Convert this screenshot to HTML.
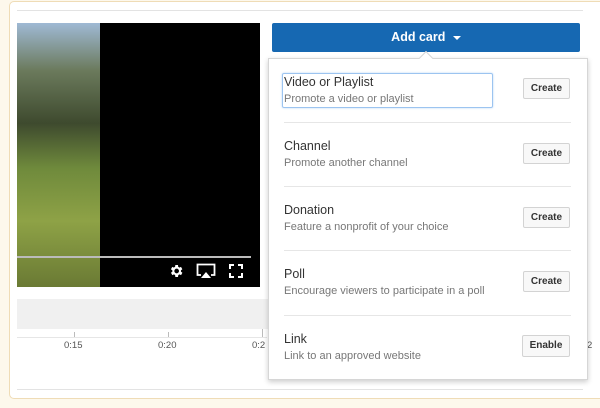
<!DOCTYPE html>
<html><head><style>
*{margin:0;padding:0;box-sizing:border-box}
body{width:600px;height:408px;background:#fdf8ec;font-family:"Liberation Sans",sans-serif;position:relative;overflow:hidden}
.frame{position:absolute;left:9px;top:1px;width:600px;height:398px;background:#fff;border:1px solid #efdcb6;border-radius:5px}
.abs{position:absolute}
.item{position:absolute;left:284px;width:290px}
.t{font-size:12.5px;color:#333}
.s{font-size:11px;color:#777;margin-top:4px}
.btn{position:absolute;left:523px;width:47px;height:21px;border:1px solid #d3d3d3;background:#f8f8f8;border-radius:2px;font-size:10px;font-weight:bold;color:#333;text-align:center;line-height:19px}
.sep{position:absolute;left:284px;width:287px;height:1px;background:#e6e6e6}
.tk{position:absolute;top:340px;font-size:9.5px;color:#555}
</style></head><body>
<div class="frame"></div>
<div class="abs" style="left:17px;top:10px;width:566px;height:1px;background:#e3e3e3"></div>
<div class="abs" style="left:17px;top:389px;width:566px;height:1px;background:#e3e3e3"></div>
<div class="abs" style="left:17px;top:23px;width:243px;height:264px;background:#000"></div>
<div class="abs" style="left:17px;top:23px;width:83px;height:264px;background:linear-gradient(180deg,#9fb9d4 0%,#6b7a5c 18%,#3e4a2e 38%,#6f8a3c 55%,#8ea246 75%,#6a7a34 100%)"></div>
<div class="abs" style="left:17px;top:256px;width:234px;height:2px;background:#bbb"></div>
<svg class="abs" style="left:168px;top:263px" width="16" height="16" viewBox="0 0 24 24"><path fill="#fff" d="M19.4 13a7.5 7.5 0 000-2l2.1-1.6-2-3.5-2.5 1a7 7 0 00-1.700-1L15 3h-4l-.4 2.9a7 7 0 00-1.7 1l-2.5-1-2 3.5L6.6 11a7.5 7.5 0 000 2l-2.1 1.6 2 3.5 2.5-1a7 7 0 001.7 1L11 21h4l.4-2.9a7 7 0 001.7-1l2.5 1 2-3.5zM13 15.5a3.5 3.5 0 110-7 3.5 3.5 0 010 7z"/></svg>
<svg class="abs" style="left:196px;top:263px" width="20" height="16" viewBox="0 0 20 16"><path fill="none" stroke="#fff" stroke-width="1.8" d="M5 12H1.5V1.5h17V12H15"/><path fill="#fff" d="M10 9l5 6H5z"/></svg>
<svg class="abs" style="left:229px;top:264px" width="14" height="14" viewBox="0 0 14 14"><path fill="none" stroke="#fff" stroke-width="2" d="M1 5V1h4M9 1h4v4M13 9v4H9M5 13H1V9"/></svg>
<div class="abs" style="left:17px;top:299px;width:260px;height:30px;background:#f0f0f0"></div>
<div class="abs" style="left:17px;top:337px;width:250px;height:1px;background:#e6e6e6"></div>
<div class="abs" style="left:74px;top:332px;width:1px;height:5px;background:#bbb"></div>
<div class="abs" style="left:168px;top:332px;width:1px;height:5px;background:#bbb"></div>
<div class="abs" style="left:262px;top:329px;width:1px;height:8px;background:#bbb"></div>
<div class="tk" style="left:64px">0:15</div>
<div class="tk" style="left:158px">0:20</div>
<div class="tk" style="left:252px">0:2</div>
<div class="tk" style="left:587px">2</div>
<div class="abs" style="left:272px;top:23px;width:308px;height:29px;background:#1668b2;border-radius:2px;color:#fff;font-weight:bold;font-size:12.5px;text-align:center;line-height:29px">Add card <span style="display:inline-block;width:0;height:0;border-left:4px solid transparent;border-right:4px solid transparent;border-top:4px solid #fff;vertical-align:middle;margin-left:4px"></span></div>
<div class="abs" style="left:268px;top:58px;width:320px;height:322px;background:#fff;border:1px solid #d6d6d6;box-shadow:0 2px 5px rgba(0,0,0,.2)"></div>
<div class="abs" style="left:421px;top:53px;width:10px;height:10px;background:#fff;transform:rotate(45deg);border-left:1px solid #d6d6d6;border-top:1px solid #d6d6d6"></div>
<div class="abs" style="left:282px;top:73px;width:211px;height:35px;border:1px solid #9cc4f0;border-radius:2px;box-shadow:0 0 2px #bcd8f7"></div>
<div class="item" style="top:75px"><div class="t">Video or Playlist</div><div class="s">Promote a video or playlist</div></div>
<div class="btn" style="top:78px">Create</div>
<div class="sep" style="top:122px"></div>
<div class="item" style="top:139px"><div class="t">Channel</div><div class="s">Promote another channel</div></div>
<div class="btn" style="top:143px">Create</div>
<div class="sep" style="top:186px"></div>
<div class="item" style="top:203px"><div class="t">Donation</div><div class="s">Feature a nonprofit of your choice</div></div>
<div class="btn" style="top:207px">Create</div>
<div class="sep" style="top:250px"></div>
<div class="item" style="top:267px"><div class="t">Poll</div><div class="s">Encourage viewers to participate in a poll</div></div>
<div class="btn" style="top:271px">Create</div>
<div class="sep" style="top:315px"></div>
<div class="item" style="top:332px"><div class="t">Link</div><div class="s">Link to an approved website</div></div>
<div class="btn" style="top:335px;left:522px;width:48px;height:22px">Enable</div>
</body></html>
